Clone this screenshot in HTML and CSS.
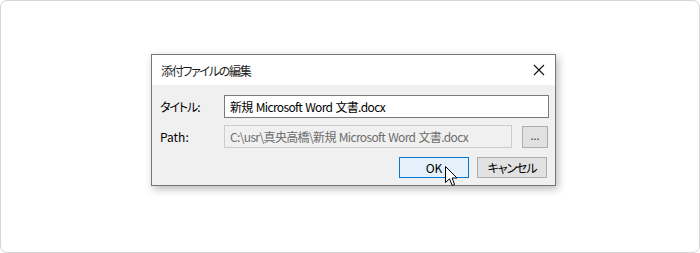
FILE: index.html
```html
<!DOCTYPE html>
<html lang="ja">
<head>
    <meta charset="UTF-8">
    <title>添付ファイルの編集</title>
    <link rel="stylesheet" href="styles.css">
</head>
<body>
    <div class="frame">
        <div class="dialog">
            <div class="titlebar">
                <span class="title">添付ファイルの編集</span>
                <span class="close">
                    <svg width="12" height="12" viewBox="0 0 12 12">
                        <path d="M1 1 L11 11 M11 1 L1 11" stroke="#111" stroke-width="1.1" fill="none"/>
                    </svg>
                </span>
            </div>
            <div class="content">
                <div class="row">
                    <label class="label jp">タイトル:</label>
                    <div class="input">新規 Microsoft Word 文書.docx</div>
                </div>
                <div class="row">
                    <label class="label">Path:</label>
                    <div class="input disabled">C:\usr\真央高橋\新規 Microsoft Word 文書.docx</div>
                    <button class="browse">...</button>
                </div>
                <div class="buttons">
                    <button class="btn default">OK</button>
                    <button class="btn jp">キャンセル</button>
                    <!-- mouse pointer over the OK button -->
                    <svg class="cursor" width="13" height="21" viewBox="0 0 13 21">
                        <path d="M0.5 0.5 L0.5 16.5 L4.5 12.8 L7.2 19.5 L9.6 18.5 L7 12 L12 12 Z" fill="#fff" stroke="#000" stroke-width="1" stroke-linejoin="miter"/>
                    </svg>
                </div>
            </div>
        </div>
    </div>
</body>
</html>
```

FILE: styles.css
```css
html, body {
    margin: 0;
    padding: 0;
    background-color: #fff;
}
.frame {
    box-sizing: border-box;
    width: 700px;
    height: 253px;
    border: 1px solid #d6d6d6;
    border-radius: 7px;
    padding: 53px 0 0 150px;
    font-family: "Noto Sans CJK JP", "Noto Sans", sans-serif;
    font-size: 12px;
    font-feature-settings: "palt";
    color: #000;
}
.dialog {
    width: 403px;
    border: 1px solid #767676;
    background-color: #f0f0f0;
    box-shadow: 2px 3px 8px rgba(0, 0, 0, 0.28);
}
.titlebar {
    height: 30px;
    background-color: #fff;
    display: flex;
    align-items: center;
    justify-content: space-between;
    padding: 0 9px 0 9px;
}
.title {
    color: #1a1a1a;
    letter-spacing: -1.3px;
}
.close {
    display: flex;
    width: 12px;
    height: 12px;
    margin-right: 1px;
}
.content {
    padding: 10px 6px 7px 8px;
}
.row {
    display: flex;
    align-items: center;
    margin-bottom: 7px;
}
.label {
    width: 64px;
}
.jp {
    letter-spacing: -1.1px;
}
.input {
    box-sizing: border-box;
    flex: 1;
    height: 23px;
    line-height: 21px;
    border: 1px solid #7a7a7a;
    background-color: #fff;
    padding: 0 5px;
    white-space: nowrap;
    overflow: hidden;
    letter-spacing: -0.65px;
    word-spacing: 1px;
}
.input.disabled {
    flex: none;
    width: 288px;
    border-color: #cccccc;
    background-color: #f0f0f0;
    color: #6d6d6d;
}
.browse {
    box-sizing: border-box;
    width: 26px;
    height: 22px;
    margin-left: 10px;
    border: 1px solid #adadad;
    background-color: #e1e1e1;
    font-family: inherit;
    font-size: 11px;
    color: #333;
    padding: 0 0 3px 0;
    line-height: 1;
}
.buttons {
    position: relative;
    display: flex;
    justify-content: flex-end;
    gap: 8px;
    padding-top: 2px;
    padding-right: 2px;
}
.btn {
    box-sizing: border-box;
    width: 70px;
    height: 21px;
    border: 1px solid #adadad;
    background-color: #e1e1e1;
    font-family: inherit;
    font-size: 12px;
    font-feature-settings: "palt";
    color: #000;
    padding: 0;
}
.btn.default {
    border-color: #0078d7;
    background-color: #e5f1fb;
}
.cursor {
    position: absolute;
    left: 285px;
    top: 11px;
}
```
